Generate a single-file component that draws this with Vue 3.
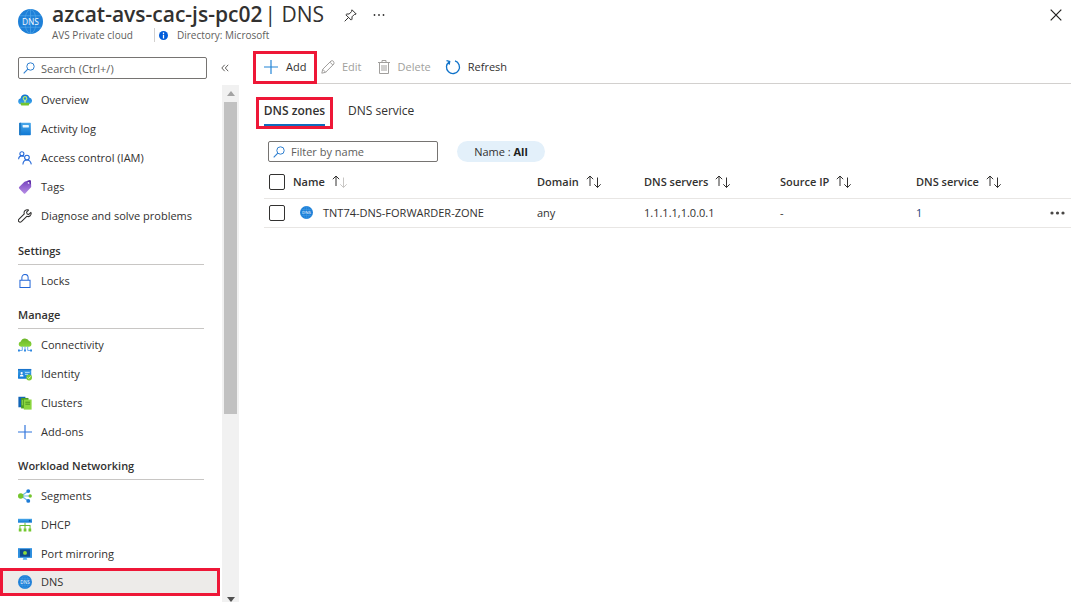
<script setup>
import { h, ref } from 'vue'

const DnsIcon = () =>
  h('svg', { viewBox: '0 0 24 24', 'aria-hidden': 'true' }, [
    h('circle', { cx: 12, cy: 12, r: 12, fill: '#1e80d8' }),
    h('g', { fill: 'none', stroke: '#4ea5e9', 'stroke-width': 0.7 }, [
      h('ellipse', { cx: 12, cy: 12, rx: 5.5, ry: 11.5 }),
      h('path', { d: 'M12 0v24M2 6.500h20M2 17.500h20' }),
    ]),
    h('text', { x: 12, y: 15, 'text-anchor': 'middle', fill: '#f4faff', 'font-size': 8, 'font-weight': 500 }, 'DNS'),
  ])

const groups = [
  {
    title: '',
    items: [
      { label: 'Overview', icon: 'overview' },
      { label: 'Activity log', icon: 'log' },
      { label: 'Access control (IAM)', icon: 'people' },
      { label: 'Tags', icon: 'tag' },
      { label: 'Diagnose and solve problems', icon: 'wrench' },
    ],
  },
  { title: 'Settings', items: [{ label: 'Locks', icon: 'lock' }] },
  {
    title: 'Manage',
    items: [
      { label: 'Connectivity', icon: 'connectivity' },
      { label: 'Identity', icon: 'identity' },
      { label: 'Clusters', icon: 'clusters' },
      { label: 'Add-ons', icon: 'plus' },
    ],
  },
  {
    title: 'Workload Networking',
    items: [
      { label: 'Segments', icon: 'segments' },
      { label: 'DHCP', icon: 'dhcp' },
      { label: 'Port mirroring', icon: 'mirror' },
      { label: 'DNS', icon: 'dns', active: true },
    ],
  },
]

const columns = ['Name', 'Domain', 'DNS servers', 'Source IP', 'DNS service']
const zones = [
  { name: 'TNT74-DNS-FORWARDER-ZONE', domain: 'any', servers: '1.1.1.1,1.0.0.1', source: '-', service: '1' },
]
const search = ref('')
const filter = ref('')
const allSelected = ref(false)
const selected = ref([])
</script>

<template>
  <div class="page">
    <svg class="sprite" aria-hidden="true">
      <defs>
        <linearGradient id="gBlue" x1="0" y1="0" x2="0" y2="1">
          <stop offset="0" stop-color="#4aa8ea" /><stop offset="1" stop-color="#0f78d4" />
        </linearGradient>
        <linearGradient id="gCloud" x1="0" y1="0" x2="0" y2="1">
          <stop offset="0" stop-color="#0f6fd0" /><stop offset="1" stop-color="#3fa9ee" />
        </linearGradient>
        <linearGradient id="gGreen" x1="0" y1="0" x2="0" y2="1">
          <stop offset="0" stop-color="#6bb52a" /><stop offset="1" stop-color="#8ad63c" />
        </linearGradient>
        <linearGradient id="gPurple" x1="0" y1="0" x2="0" y2="1">
          <stop offset="0" stop-color="#7440bd" /><stop offset="1" stop-color="#b58be4" />
        </linearGradient>
      </defs>
      <symbol id="i-overview" viewBox="0 0 18 18">
        <path d="M4 14.500A4 4 0 0 1 3.400 6.600 5.800 5.800 0 0 1 14.500 5.800 4.400 4.400 0 0 1 14 14.500z" fill="url(#gCloud)" />
        <circle cx="9" cy="7" r="2.300" fill="none" stroke="#b5ec6a" stroke-width="1.500" />
        <path d="M9 9V12.500" stroke="#d9f5ae" stroke-width="1.600" />
        <path d="M3 12.500h12l-1.200 3.500H4.200z" fill="#73c52f" />
      </symbol>
      <symbol id="i-log" viewBox="0 0 18 18">
        <rect x="1.500" y="1" width="15" height="16" rx="1" fill="url(#gBlue)" />
        <path d="M1.500 2a1 1 0 0 1 1-1H4v16H2.500a1 1 0 0 1-1-1z" fill="#1f79c4" />
        <rect x="6" y="4" width="8" height="3" rx=".5" fill="#e8f6ff" />
      </symbol>
      <symbol id="i-people" viewBox="0 0 18 18">
        <g fill="none" stroke="#2468d8" stroke-width="1.400">
          <circle cx="5" cy="3.600" r="2.600" /><path d="M.8 10.500C1 7.800 2.800 6.300 5 6.300c1 0 1.800.3 2.500.8" />
          <circle cx="11.500" cy="8.500" r="3" /><path d="M6.300 17.300c.2-3.600 2.400-5.700 5.200-5.700s5 2.100 5.600 5.700" />
        </g>
      </symbol>
      <symbol id="i-tag" viewBox="0 0 18 18">
        <path d="M9.200 1.800 15 .3q1.300-.2 1.500 1l.5 7q0 .7-.5 1.200L9.300 17.200q-.9.800-1.700 0L1.500 10.800q-.8-.9 0-1.700L8 2.500q.5-.5 1.200-.7z" fill="url(#gPurple)" />
        <path d="M11.500 1.200 15 .3q1.300-.2 1.500 1l.3 4.500z" fill="#5b2ca3" />
        <circle cx="13.600" cy="3.800" r="1.100" fill="#f4eafd" />
      </symbol>
      <symbol id="i-wrench" viewBox="0 0 18 18">
        <path d="M16.600 4.300 13.900 7l-2.200-.7-.7-2.200 2.600-2.700C11.500.5 9 1.200 8.100 3.300c-.4 1-.4 2 0 3L1.300 13.100c-1 1-.9 2.400-.1 3.200s2.200.8 3.200-.1L11.300 9.400c2.200.8 4.600-.2 5.400-2.400.3-.9.300-1.800-.1-2.700z" fill="none" stroke="#2b2a29" stroke-width="1.300" stroke-linejoin="round" />
      </symbol>
      <symbol id="i-lock" viewBox="0 0 18 18">
        <path d="M2.500 8h13v9.300h-13zM5 8V4.600a4 4 0 0 1 8 0V8" fill="none" stroke="#2468d8" stroke-width="1.300" />
      </symbol>
      <symbol id="i-connectivity" viewBox="0 0 18 18">
        <path d="M4 11.300A3.500 3.500 0 0 1 3.600 4.400 5.700 5.700 0 0 1 14.200 4a3.700 3.700 0 0 1 .2 7.300z" fill="url(#gGreen)" />
        <path d="M9 11V16M5.500 11V16M12.500 11V16M1 16h4.500M12.500 16H17" stroke="#61a5ec" stroke-width="1.200" fill="none" />
        <path d="M0 14.800h2.400v2.400H0zM15.600 14.800H18v2.400h-2.400zM7.800 14.800h2.400v2.400H7.800z" fill="#2c86df" />
      </symbol>
      <symbol id="i-identity" viewBox="0 0 18 18">
        <rect y="2.500" width="17" height="12.500" rx=".6" fill="url(#gBlue)" />
        <path d="M0 2.500h17v2H0z" fill="#1a74cc" />
        <rect x="1.800" y="5.800" width="5.700" height="6.800" fill="#2386d9" />
        <circle cx="4.700" cy="7.800" r="1.500" fill="#fff" /><path d="M2.300 12.200q0-2.700 2.400-2.700t2.400 2.700z" fill="#fff" />
        <path d="M9 7h6M9 9.500h4" stroke="#b9e0fb" stroke-width="1.200" />
        <circle cx="14.300" cy="13.500" r="3.700" fill="#7dcb35" />
        <path d="m12.500 13.500 1.300 1.300 2.500-2.700" stroke="#fff" fill="none" />
      </symbol>
      <symbol id="i-clusters" viewBox="0 0 18 18">
        <path d="M.5 1h9v13.500h-9z" fill="#1265b7" />
        <path d="M4 2.500h9.500V16H4z" fill="#4d9f23" />
        <path d="M7.500 4.500h10V17.500h-10z" fill="#8bd63f" />
        <path d="M9.500 8h6M9.500 10.500h6" stroke="#478f20" stroke-width="1.200" />
        <path d="M5.500 5v7" stroke="#a9e56a" />
      </symbol>
      <symbol id="i-plus" viewBox="0 0 18 18">
        <path d="M9 0v18M0 9h18" stroke="currentColor" stroke-width="1.500" />
      </symbol>
      <symbol id="i-segments" viewBox="0 0 18 18">
        <path d="M4 9h11M4 9l9-6M4 9l9 6" stroke="#6cb8ea" stroke-width="1.500" />
        <circle cx="3.500" cy="9" r="3.500" fill="#75c52e" /><circle cx="15.700" cy="9" r="2.200" fill="#75c52e" />
        <circle cx="13.200" cy="2.700" r="2.500" fill="#1e7cd6" /><circle cx="13.200" cy="15.300" r="2.500" fill="#1e7cd6" />
      </symbol>
      <symbol id="i-dhcp" viewBox="0 0 18 18">
        <path d="M0 1h18v5H0z" fill="url(#gBlue)" /><path d="M14 2.500h2v2h-2z" fill="#0b4f98" />
        <path d="M9 6v8M2.500 14V9.500h13V14" fill="none" stroke="#65bd35" stroke-width="1.300" />
        <path d="M1 13.500h3.500v4H1zM7.300 13.500h3.500v4H7.300zM13.500 13.500H17v4h-3.500z" fill="#74c82f" />
      </symbol>
      <symbol id="i-mirror" viewBox="0 0 18 18">
        <path d="M0 1.500h18v12.500H0z" fill="#2f90e0" /><path d="M2.500 3h13v9.500h-13z" fill="#0c4b91" />
        <circle cx="9" cy="7.600" r="2.500" fill="#8edb3c" />
        <path d="M7 14h4l1 2.500H6z" fill="#5bb0e9" />
      </symbol>
      <symbol id="i-search" viewBox="0 0 12 12">
        <circle cx="7.500" cy="4.500" r="3.700" fill="none" stroke="#2f7fd0" /><path d="M4.800 7.200.7 11.300" stroke="#2f7fd0" stroke-width="1.100" />
      </symbol>
      <symbol id="i-sort" viewBox="0 0 16 13">
        <path d="M4 11V1M.8 4.200 4 1l3.200 3.200" fill="none" stroke="currentColor" />
        <path d="M11.500 2.500v10M8.300 9.300l3.200 3.200 3.200-3.200" fill="none" stroke="var(--down, currentColor)" />
      </symbol>
    </svg>

    <header class="header">
      <DnsIcon class="logo" />
      <div class="heading">
        <div class="title-row">
          <h1><b>azcat-avs-cac-js-pc02</b>| DNS</h1>
          <button class="plain pin" aria-label="Pin">
            <svg width="13" height="13" viewBox="0 0 13 13"><path d="M8 .8 12.200 5l-1 .5-.8-.1L8 7.800v2.400l-.8.9L1.900 5.800l.9-.8h2.400l2.400-2.400-.1-.8zM4.500 8.500.7 12.300" fill="none" stroke="#323130" /></svg>
          </button>
          <button class="plain more" aria-label="More options">
            <svg width="12" height="4" viewBox="0 0 12 4"><g fill="#323130"><circle cx="1.500" cy="2" r=".9" /><circle cx="6" cy="2" r=".9" /><circle cx="10.500" cy="2" r=".9" /></g></svg>
          </button>
        </div>
        <div class="subtitle">
          <span class="kind">AVS Private cloud</span>
          <svg width="9" height="9" viewBox="0 0 10 10" aria-hidden="true"><circle cx="5" cy="5" r="5" fill="#015cda" /><path d="M5 1.800v1.400M5 4.200v4" stroke="#fff" stroke-width="1.400" /></svg>
          <span>Directory: Microsoft</span>
        </div>
      </div>
      <button class="plain close" aria-label="Close">
        <svg width="12" height="12" viewBox="0 0 12 12"><path d="m.7.7 10.600 10.600M11.300.7.7 11.300" stroke="#201f1e" stroke-width="1.200" /></svg>
      </button>
    </header>

    <div class="body">
      <aside class="sidebar">
        <div class="search-row">
          <label class="box">
            <svg width="12" height="12" aria-hidden="true"><use href="#i-search" /></svg>
            <input v-model="search" type="text" aria-label="Search menu" placeholder="Search (Ctrl+/)" />
          </label>
          <button class="plain collapse" aria-label="Collapse menu">
            <svg width="8" height="8" viewBox="0 0 8 8"><path d="M3.700.8.800 4l2.900 3.200M7.200.8 4.300 4l2.900 3.200" fill="none" stroke="#605e5c" /></svg>
          </button>
        </div>
        <div class="menu">
          <nav>
            <section v-for="g in groups" :key="g.title">
              <h2 v-if="g.title">{{ g.title }}</h2>
              <a v-for="i in g.items" :key="i.label" href="#" :class="{ active: i.active }">
                <DnsIcon v-if="i.icon === 'dns'" class="icon" />
                <svg v-else :class="'icon ' + i.icon" aria-hidden="true"><use :href="'#i-' + i.icon" /></svg>
                <span>{{ i.label }}</span>
              </a>
            </section>
          </nav>
          <div class="scrollbar" aria-hidden="true">
            <svg width="8" height="5" viewBox="0 0 8 5"><path d="M0 5 4 0l4 5z" fill="#a3a3a3" /></svg>
            <div class="track"><div class="thumb"></div></div>
            <svg width="8" height="5" viewBox="0 0 8 5"><path d="m0 0 4 5 4-5z" fill="#505050" /></svg>
          </div>
        </div>
      </aside>

      <main>
        <div class="toolbar">
          <button class="add marked">
            <svg class="add-icon" width="14" height="14" aria-hidden="true"><use href="#i-plus" /></svg>Add
          </button>
          <button class="edit" disabled>
            <svg width="14" height="14" viewBox="0 0 14 14" aria-hidden="true"><path d="m.8 13.200.9-3.900L10 1q1.300-.8 2.300.2T12.900 4l-8.300 8.300zM9 2.200l2.800 2.800M1.700 9.300l3 3" fill="none" stroke="#a19f9d" /></svg>Edit
          </button>
          <button class="delete" disabled>
            <svg width="12" height="14" viewBox="0 0 12 14" aria-hidden="true"><path d="M0 2.500h12M4 2.500v-2h4v2M1.500 2.500v11h9v-11" fill="none" stroke="#a19f9d" /><path d="M4 5v6M6 5v6M8 5v6" stroke="#a19f9d" /></svg>Delete
          </button>
          <button class="refresh">
            <svg width="16" height="16" viewBox="0 0 16 16" aria-hidden="true"><path d="M4.300 2.700A6.500 6.500 0 1 0 10 1.900M1.500 1.600l3.200.8-.5 3.300" fill="none" stroke="#0f72c9" stroke-width="1.300" /></svg>Refresh
          </button>
        </div>

        <div class="tabs" role="tablist">
          <button class="tab marked" role="tab" aria-selected="true"><span>DNS zones</span></button>
          <button class="tab" role="tab" aria-selected="false"><span>DNS service</span></button>
        </div>

        <div class="filters">
          <label class="box">
            <svg width="12" height="12" aria-hidden="true"><use href="#i-search" /></svg>
            <input v-model="filter" type="text" aria-label="Filter by name" placeholder="Filter by name" />
          </label>
          <button class="pill">Name : <b>All</b></button>
        </div>

        <table>
          <colgroup>
            <col class="c-check" /><col class="c-name" /><col class="c-domain" /><col class="c-servers" /><col class="c-source" /><col /><col class="c-menu" />
          </colgroup>
          <thead>
            <tr>
              <th><input v-model="allSelected" type="checkbox" aria-label="Select all zones" /></th>
              <th v-for="(c, n) in columns" :key="c" scope="col">
                <button class="plain sort" :class="{ ascending: n === 0 }">{{ c }}<svg width="16" height="13" aria-hidden="true"><use href="#i-sort" /></svg></button>
              </th>
              <th></th>
            </tr>
          </thead>
          <tbody>
            <tr v-for="z in zones" :key="z.name">
              <td><input v-model="selected" type="checkbox" :value="z.name" :aria-label="'Select ' + z.name" /></td>
              <td><div class="zone"><DnsIcon class="zone-icon" />{{ z.name }}</div></td>
              <td>{{ z.domain }}</td>
              <td>{{ z.servers }}</td>
              <td>{{ z.source }}</td>
              <td><a href="#">{{ z.service }}</a></td>
              <td>
                <button class="plain" aria-label="Row actions">
                  <svg width="15" height="4" viewBox="0 0 15 4"><g fill="#484644"><circle cx="2" cy="2" r="1.600" /><circle cx="7.500" cy="2" r="1.600" /><circle cx="13" cy="2" r="1.600" /></g></svg>
                </button>
              </td>
            </tr>
          </tbody>
        </table>
      </main>
    </div>
  </div>
</template>

<style>
html, body { background: #fff; }
</style>

<style scoped>
* { box-sizing: border-box; }
.page {
  display: flex;
  flex-direction: column;
  height: 100vh;
  overflow: hidden;
  color: #323130;
  font: 11px/16px "Open Sans", "Noto Sans", sans-serif;
}
.sprite { position: absolute; width: 0; height: 0; }
svg { display: block; flex: none; }
button, input { font: inherit; color: inherit; }
button { padding: 0; border: 0; background: none; white-space: nowrap; }
.plain { display: flex; align-items: center; }
a { color: inherit; text-decoration: none; }

.header { display: flex; align-items: flex-start; padding: 0 22px 0 18px; height: 51px; flex: none; }
.logo { width: 25px; height: 25px; margin: 9px 9px 0 0; }
.heading { flex: 1; }
.title-row { display: flex; align-items: center; height: 28px; }
h1 { margin: 0; font-size: 21px; line-height: 28px; font-weight: 400; }
h1 b { font-weight: 600; margin-right: 2px; }
.pin { margin: 2px 0 0 20px; }
.more { margin: 2px 0 0 16px; }
.close { margin-top: 9px; }
.subtitle { display: flex; align-items: center; height: 14px; font-size: 10px; line-height: 14px; color: #605e5c; }
.kind { padding-right: 21px; margin-right: 4px; border-right: 1px solid #d2d0ce; }
.subtitle svg { margin-right: 9px; }

.body { display: flex; flex: 1; min-height: 0; }
.sidebar { width: 239px; flex: none; display: flex; flex-direction: column; }
.search-row { display: flex; align-items: center; height: 34px; padding: 0 10px 0 18px; gap: 14px; flex: none; }
.box {
  display: flex; align-items: center; gap: 6px; height: 22px; width: 189px; padding: 0 4px;
  border: 1px solid #767472; border-radius: 2px;
}
.box input { flex: 1; min-width: 0; padding: 0; border: 0; outline: 0; background: none; height: 18px; }
.box input::placeholder { color: #605e5c; opacity: 1; }
.menu { flex: 1; min-height: 0; display: flex; }
nav { flex: 1; min-width: 0; overflow: hidden; }
nav section:first-child { margin-bottom: 1px; }
nav h2 {
  margin: 0 18px 1px; height: 34px; padding-top: 12px; border-bottom: 1px solid #c8c6c4;
  font-size: 11px; line-height: 16px; font-weight: 600;
}
nav a { display: flex; align-items: center; gap: 9px; height: 29px; padding-left: 18px; white-space: nowrap; }
nav a.active { margin-right: 2px; padding-left: 15px; border: 3px solid #ee1737; background: #edebe9; height: 28px; }
.icon { width: 14px; height: 14px; }
.plus { color: #2f74dc; }
.scrollbar {
  width: 17px; flex: none; display: flex; flex-direction: column; align-items: center;
  padding-top: 6px; background: #f1f1f1;
}
.track { flex: 1; align-self: stretch; padding: 6px 2px 0; }
.thumb { height: 63%; background: #c1c1c1; }

main { flex: 1; min-width: 0; padding: 0 13px 0 14px; }
.toolbar { display: flex; align-items: center; height: 33px; border-bottom: 1px solid #d2d0ce; }
.toolbar button { display: flex; align-items: center; gap: 7px; }
.marked { border: 3px solid #ee1737; }
.toolbar .add { width: 64px; height: 33px; padding-left: 8px; gap: 8px; }
.add-icon { color: #2083d6; }
.toolbar .edit { margin-left: 4px; }
.toolbar .delete { margin-left: 16px; gap: 8px; }
.toolbar .refresh { margin-left: 14px; }
button:disabled { color: #a19f9d; }
.tabs { display: flex; align-items: center; height: 32px; margin: 13px 0 12px 3px; gap: 15px; font-size: 12px; }
.tab.marked { height: 32px; width: 77px; font-weight: 600; }
.tab span { display: inline-block; height: 26px; line-height: 22px; border-bottom: 2px solid transparent; }
.tab.marked span { border-color: #0f6cbd; }
.filters { display: flex; gap: 19px; padding-left: 15px; }
.filters .box { width: 170px; height: 21px; }
.pill { height: 21px; width: 88px; border-radius: 11px; background: #e3f0fa; }
.pill b { font-weight: 700; color: #201f1e; }

table { width: calc(100% - 11px); margin-left: 11px; margin-top: 4px; border-collapse: collapse; table-layout: fixed; }
.c-check { width: 29px; }
.c-name { width: 244px; }
.c-domain { width: 107px; }
.c-servers, .c-source { width: 136px; }
.c-menu { width: 21px; }
th, td { padding: 0; text-align: left; font-weight: 400; border-bottom: 1px solid #e8e6e4; white-space: nowrap; }
th { height: 32px; }
td { height: 29px; }
.sort { gap: 7px; font-weight: 600; }
.ascending { --down: #c8c6c4; }
.zone { display: flex; align-items: center; gap: 10px; padding-left: 7px; }
.zone-icon { width: 13px; height: 13px; }
td a { color: #1c3f76; }
input[type="checkbox"] {
  appearance: none; display: block; width: 16px; height: 16px; margin: 0 0 0 5px;
  border: 1px solid #323130; border-radius: 2px; background: #fff;
}
input[type="checkbox"]:checked { background: #0f6cbd; }
</style>
